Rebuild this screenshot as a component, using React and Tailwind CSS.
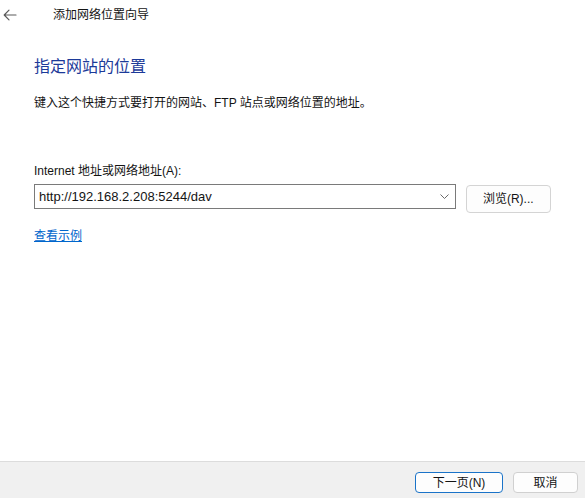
export default function App() {
  const font = { fontFamily: '"Liberation Sans", "Noto Sans CJK SC", sans-serif' }
  return (
    <div className="w-[585px] h-[498px] flex flex-col bg-white text-[12px] text-[#141414] overflow-hidden" style={font}>
      {/* 标题栏 */}
      <div className="h-[30px] flex items-center">
        <svg width="14" height="12" viewBox="0 0 14 12" className="ml-[3px] text-[#5a5a5a]">
          <path d="M13 6H1.5M6 1.2L1.2 6L6 10.8" stroke="currentColor" strokeWidth="1.2" fill="none" strokeLinecap="round" strokeLinejoin="round" />
        </svg>
        <span className="ml-[36px] leading-[16px]">添加网络位置向导</span>
      </div>

      <div className="flex-1 px-[34px] pt-[27px]">
        <h1 className="text-[16px] leading-[20px] text-[#1c3a99]">指定网站的位置</h1>
        <p className="mt-[18px] leading-[16px]">键入这个快捷方式要打开的网站、FTP 站点或网络位置的地址。</p>

        <div className="mt-[52px] leading-[16px]">Internet 地址或网络地址(A):</div>
        <div className="mt-[5px] flex items-start">
          <div className="w-[424px] h-[25px] border border-[#7a7a7a] flex items-center pl-[4px] pr-[6px]">
            <span className="flex-1 text-[13px]">http://192.168.2.208:5244/dav</span>
            <svg width="9" height="5" viewBox="0 0 9 5" className="text-[#6a6a6a]">
              <path d="M0.5 0.5L4.5 4.5L8.5 0.5" stroke="currentColor" strokeWidth="1" fill="none" />
            </svg>
          </div>
          <button className="ml-[10px] mt-[1px] w-[86px] h-[28px] rounded-[4px] border border-[#d4d4d4] bg-[#fdfdfd] leading-[16px]">
            浏览(R)...
          </button>
        </div>

        <a href="#" className="mt-[15px] inline-block leading-[16px] text-[#0066cc] underline">查看示例</a>
      </div>

      {/* 底部按钮 */}
      <div className="h-[37px] border-t border-[#dcdcdc] bg-[#f0f0f0] flex justify-end items-start pt-[10px] pr-[7px] gap-[10px]">
        <button className="w-[88px] h-[21px] rounded-[4px] border-[1.5px] border-[#1a73c8] bg-[#fdfdfd] leading-[16px]">下一页(N)</button>
        <button className="w-[65px] h-[21px] rounded-[4px] border border-[#d0d0d0] bg-[#fdfdfd] leading-[16px]">取消</button>
      </div>
    </div>
  )
}
